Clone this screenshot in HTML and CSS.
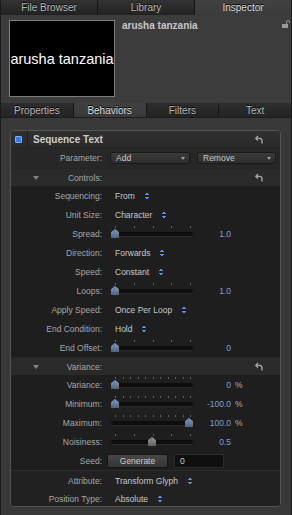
FILE: index.html
```html
<!DOCTYPE html>
<html lang="en">
<head>
    <meta charset="UTF-8">
    <meta name="viewport" content="width=device-width, initial-scale=1.0">
    <title>Inspector - Behaviors</title>
    <link rel="stylesheet" href="styles.css">
</head>
<body>
    <div class="window">
        <div class="tabs top-tabs">
            <div class="tab">File Browser</div>
            <div class="tab">Library</div>
            <div class="tab active">Inspector</div>
        </div>

        <div class="header">
            <div class="preview">arusha tanzania</div>
            <div class="title">arusha tanzania</div>
            <svg class="lock" width="8" height="8" viewBox="0 0 8 8">
                <path d="M4.5 4V2.2a1.6 1.6 0 0 1 3.2 0V3" fill="none" stroke="#9a9a9a" stroke-width="1"/>
                <rect x="0" y="4" width="6" height="4" fill="#9a9a9a"/>
            </svg>
        </div>

        <div class="tabs sub-tabs">
            <div class="tab">Properties</div>
            <div class="tab active">Behaviors</div>
            <div class="tab">Filters</div>
            <div class="tab">Text</div>
        </div>

        <div class="pane">
            <div class="behavior">
                <div class="beh-head">
                    <div class="check-cell"><span class="check"></span></div>
                    <span class="beh-title">Sequence Text</span>
                    <svg class="reset" width="8" height="9" viewBox="0 0 8 9"><path d="M3 1L0.8 3.3L3 5.6M1 3.3H4.6Q7 3.3 7 5.8V8.5" fill="none" stroke="#a8a8a8" stroke-width="1.3"/></svg>
                </div>

                <div class="row param-row">
                    <span class="label">Parameter:</span>
                    <div class="popup add">Add<span class="popup-arrow"></span></div>
                    <div class="popup remove">Remove<span class="popup-arrow"></span></div>
                </div>

                <div class="group-head">
                    <span class="disclosure"></span>
                    <span class="label">Controls:</span>
                    <svg class="reset" width="8" height="9" viewBox="0 0 8 9"><path d="M3 1L0.8 3.3L3 5.6M1 3.3H4.6Q7 3.3 7 5.8V8.5" fill="none" stroke="#a8a8a8" stroke-width="1.3"/></svg>
                </div>

                <div class="rows">
                    <div class="row"><span class="label">Sequencing:</span><span class="value">From</span><span class="stepper"></span></div>
                    <div class="row"><span class="label">Unit Size:</span><span class="value">Character</span><span class="stepper"></span></div>
                    <div class="row">
                        <span class="label">Spread:</span>
                        <div class="slider"><div class="ticks"><i></i><i></i><i></i><i></i><i></i></div><div class="track"></div><span class="knob" style="left: 0px"></span></div>
                        <span class="num">1.0</span>
                    </div>
                    <div class="row"><span class="label">Direction:</span><span class="value">Forwards</span><span class="stepper"></span></div>
                    <div class="row"><span class="label">Speed:</span><span class="value">Constant</span><span class="stepper"></span></div>
                    <div class="row">
                        <span class="label">Loops:</span>
                        <div class="slider"><div class="ticks"><i></i><i></i><i></i><i></i><i></i></div><div class="track"></div><span class="knob" style="left: 0px"></span></div>
                        <span class="num">1.0</span>
                    </div>
                    <div class="row"><span class="label">Apply Speed:</span><span class="value">Once Per Loop</span><span class="stepper"></span></div>
                    <div class="row"><span class="label">End Condition:</span><span class="value">Hold</span><span class="stepper"></span></div>
                    <div class="row">
                        <span class="label">End Offset:</span>
                        <div class="slider"><div class="ticks"><i></i><i></i><i></i><i></i><i></i></div><div class="track"></div><span class="knob" style="left: 0px"></span></div>
                        <span class="num">0</span>
                    </div>
                </div>

                <div class="group-head">
                    <span class="disclosure"></span>
                    <span class="label">Variance:</span>
                    <svg class="reset" width="8" height="9" viewBox="0 0 8 9"><path d="M3 1L0.8 3.3L3 5.6M1 3.3H4.6Q7 3.3 7 5.8V8.5" fill="none" stroke="#a8a8a8" stroke-width="1.3"/></svg>
                </div>

                <div class="rows">
                    <div class="row">
                        <span class="label">Variance:</span>
                        <div class="slider"><div class="ticks"><i></i><i></i><i></i><i></i><i></i><i></i><i></i><i></i><i></i><i></i><i></i></div><div class="track"></div><span class="knob" style="left: 0px"></span></div>
                        <span class="num">0</span><span class="unit">%</span>
                    </div>
                    <div class="row">
                        <span class="label">Minimum:</span>
                        <div class="slider"><div class="ticks"><i></i><i></i><i></i><i></i><i></i><i></i><i></i><i></i><i></i><i></i><i></i></div><div class="track"></div><span class="knob" style="left: 0px"></span></div>
                        <span class="num">-100.0</span><span class="unit">%</span>
                    </div>
                    <div class="row">
                        <span class="label">Maximum:</span>
                        <div class="slider"><div class="ticks"><i></i><i></i><i></i><i></i><i></i><i></i><i></i><i></i><i></i><i></i><i></i></div><div class="track"></div><span class="knob" style="left: 74px"></span></div>
                        <span class="num">100.0</span><span class="unit">%</span>
                    </div>
                    <div class="row">
                        <span class="label">Noisiness:</span>
                        <div class="slider"><div class="ticks"><i></i><i></i><i></i><i></i><i></i></div><div class="track"></div><span class="knob" style="left: 37px"></span></div>
                        <span class="num">0.5</span>
                    </div>
                    <div class="row">
                        <span class="label">Seed:</span>
                        <div class="button">Generate</div>
                        <div class="field">0</div>
                    </div>
                </div>

                <div class="rows attr-rows">
                    <div class="row"><span class="label">Attribute:</span><span class="value">Transform Glyph</span><span class="stepper"></span></div>
                    <div class="row last"><span class="label">Position Type:</span><span class="value">Absolute</span><span class="stepper"></span></div>
                </div>
            </div>
        </div>
    </div>
</body>
</html>
```

FILE: styles.css
```css
* {
    box-sizing: border-box;
}
body {
    margin: 0;
    background-color: #383838;
    font-family: 'Liberation Sans', Arial, sans-serif;
}
.window {
    width: 292px;
    height: 515px;
    overflow: hidden;
    background-color: #383838;
    border-left: 1px solid #1a1a1a;
    border-right: 1px solid #1a1a1a;
}

/* tab bars */
.tabs {
    display: flex;
}
.tab {
    flex: 1;
    text-align: center;
    font-size: 10px;
    color: #b8b8b8;
    background: linear-gradient(#333333, #222222);
    border-right: 1px solid #151515;
    text-shadow: 0 -1px 0 #000;
}
.tab:last-child {
    border-right: none;
}
.tab.active {
    background: linear-gradient(#424242, #3b3b3b);
    color: #dcdcdc;
}
.top-tabs .tab {
    height: 15px;
    line-height: 15px;
}
.sub-tabs {
    border-bottom: 1px solid #1c1c1c;
}
.sub-tabs .tab {
    height: 14px;
    line-height: 15px;
    background: linear-gradient(#2e2e2e, #232323);
}
.sub-tabs .tab.active {
    background: linear-gradient(#404040, #393939);
}

/* header with preview */
.header {
    display: flex;
    align-items: flex-start;
    height: 88px;
    padding: 5px 0 0 8px;
    background-color: #3c3c3c;
}
.preview {
    flex: none;
    width: 106px;
    height: 77px;
    border: 1px solid #7c7c7c;
    background-color: #000;
    color: #fff;
    font-size: 14.5px;
    white-space: nowrap;
    display: flex;
    align-items: center;
    justify-content: center;
}
.title {
    flex: 1;
    margin-left: 7px;
    font-size: 10px;
    font-weight: bold;
    line-height: 12px;
    color: #c6c6c6;
}
.lock {
    margin: 0 1px 0 0;
}

/* behaviors pane */
.pane {
    padding: 12px 10px 0 9px;
}
.behavior {
    border: 1px solid #555;
    border-radius: 4px;
    overflow: hidden;
    background-color: #1e1e1e;
}
.beh-head {
    display: flex;
    align-items: center;
    height: 17px;
    background: linear-gradient(#303030, #2a2a2a);
    border-bottom: 1px solid #232323;
}
.check-cell {
    width: 17px;
    height: 100%;
    border-right: 1px solid #1c1c1c;
    display: flex;
    align-items: center;
    padding-left: 4px;
}
.check {
    width: 7px;
    height: 7px;
    background-color: #2f7df5;
    border: 1px solid #7fb0f8;
    border-radius: 1px;
}
.beh-title {
    flex: 1;
    padding-left: 5px;
    font-size: 10px;
    font-weight: bold;
    color: #cccccc;
}
.reset {
    margin-right: 17px;
}

.row {
    display: flex;
    align-items: center;
    height: 19px;
    font-size: 8.5px;
}
.label {
    width: 91px;
    text-align: right;
    color: #a6a6a6;
    white-space: nowrap;
}
.value {
    margin-left: 13px;
    color: #c8c8c8;
    white-space: nowrap;
}
.stepper {
    width: 4px;
    height: 8px;
    margin-left: 10px;
    background:
        linear-gradient(to bottom right, transparent 50%, #5a8ee2 50%) 0 0 / 2px 3px no-repeat,
        linear-gradient(to bottom left, transparent 50%, #5a8ee2 50%) 2px 0 / 2px 3px no-repeat,
        linear-gradient(to top right, transparent 50%, #5a8ee2 50%) 0 5px / 2px 3px no-repeat,
        linear-gradient(to top left, transparent 50%, #5a8ee2 50%) 2px 5px / 2px 3px no-repeat;
}

.param-row {
    height: 20px;
    background-color: #272727;
}
.popup {
    position: relative;
    height: 12px;
    line-height: 11px;
    padding-left: 5px;
    color: #c8c8c8;
    background: linear-gradient(#3b3b3b, #2d2d2d);
    border: 1px solid #1a1a1a;
    border-radius: 2px;
}
.popup.add {
    width: 80px;
    margin-left: 8px;
}
.popup.remove {
    width: 79px;
    margin-left: 7px;
}
.popup-arrow {
    position: absolute;
    right: 4px;
    top: 4px;
    border-left: 2.5px solid transparent;
    border-right: 2.5px solid transparent;
    border-top: 3px solid #a0a0a0;
}

.group-head {
    display: flex;
    align-items: center;
    height: 19px;
    font-size: 8.5px;
    background-color: #2a2a2a;
    border-top: 1px solid #252525;
    border-bottom: 1px solid #181818;
}
.group-head + .rows {
    margin-top: -1px;
}
.group-head .label {
    width: 64px;
}
.disclosure {
    margin-left: 22px;
    width: 0;
    height: 0;
    border-left: 3px solid transparent;
    border-right: 3px solid transparent;
    border-top: 4px solid #858585;
    margin-right: -1px;
}
.group-head .reset {
    margin-left: auto;
}

.rows {
    background-color: #1e1e1e;
}
.attr-rows {
    border-top: 1px solid #2c2c2c;
    background-color: #212121;
}
.row.last {
    height: 16px;
    padding-top: 2px;
}

/* sliders */
.slider {
    position: relative;
    width: 82px;
    height: 19px;
    margin-left: 9px;
}
.ticks {
    position: absolute;
    left: 4px;
    width: 76px;
    top: 2px;
    display: flex;
    justify-content: space-between;
}
.ticks i {
    width: 1px;
    height: 2px;
    background-color: #5e5e5e;
}
.track {
    position: absolute;
    left: 0;
    right: 0;
    top: 8px;
    height: 4px;
    border-radius: 2px;
    background-color: #0d0d0d;
    box-shadow: 0 1px 0 #2a2a2a;
}
.knob {
    position: absolute;
    top: 5px;
    width: 8px;
    height: 9px;
    clip-path: polygon(50% 0, 100% 35%, 100% 100%, 0 100%, 0 35%);
    background: linear-gradient(to right, transparent 3.5px, #3a7be0 3.5px, #3a7be0 4.5px, transparent 4.5px),
        linear-gradient(#a0a0a0, #5c5c5c);
}
.num {
    width: 38px;
    text-align: right;
    color: #7e9fd6;
}
.unit {
    margin-left: 4px;
    color: #b0b0b0;
}

/* seed controls */
.button {
    width: 61px;
    height: 14px;
    margin-left: 5px;
    line-height: 13px;
    text-align: center;
    color: #cccccc;
    background: linear-gradient(#474747, #353535);
    border: 1px solid #151515;
    border-radius: 2px;
}
.field {
    width: 50px;
    height: 14px;
    margin-left: 6px;
    padding-left: 5px;
    line-height: 13px;
    color: #c8c8c8;
    background-color: #0f0f0f;
    border: 1px solid #2a2a2a;
}
```
